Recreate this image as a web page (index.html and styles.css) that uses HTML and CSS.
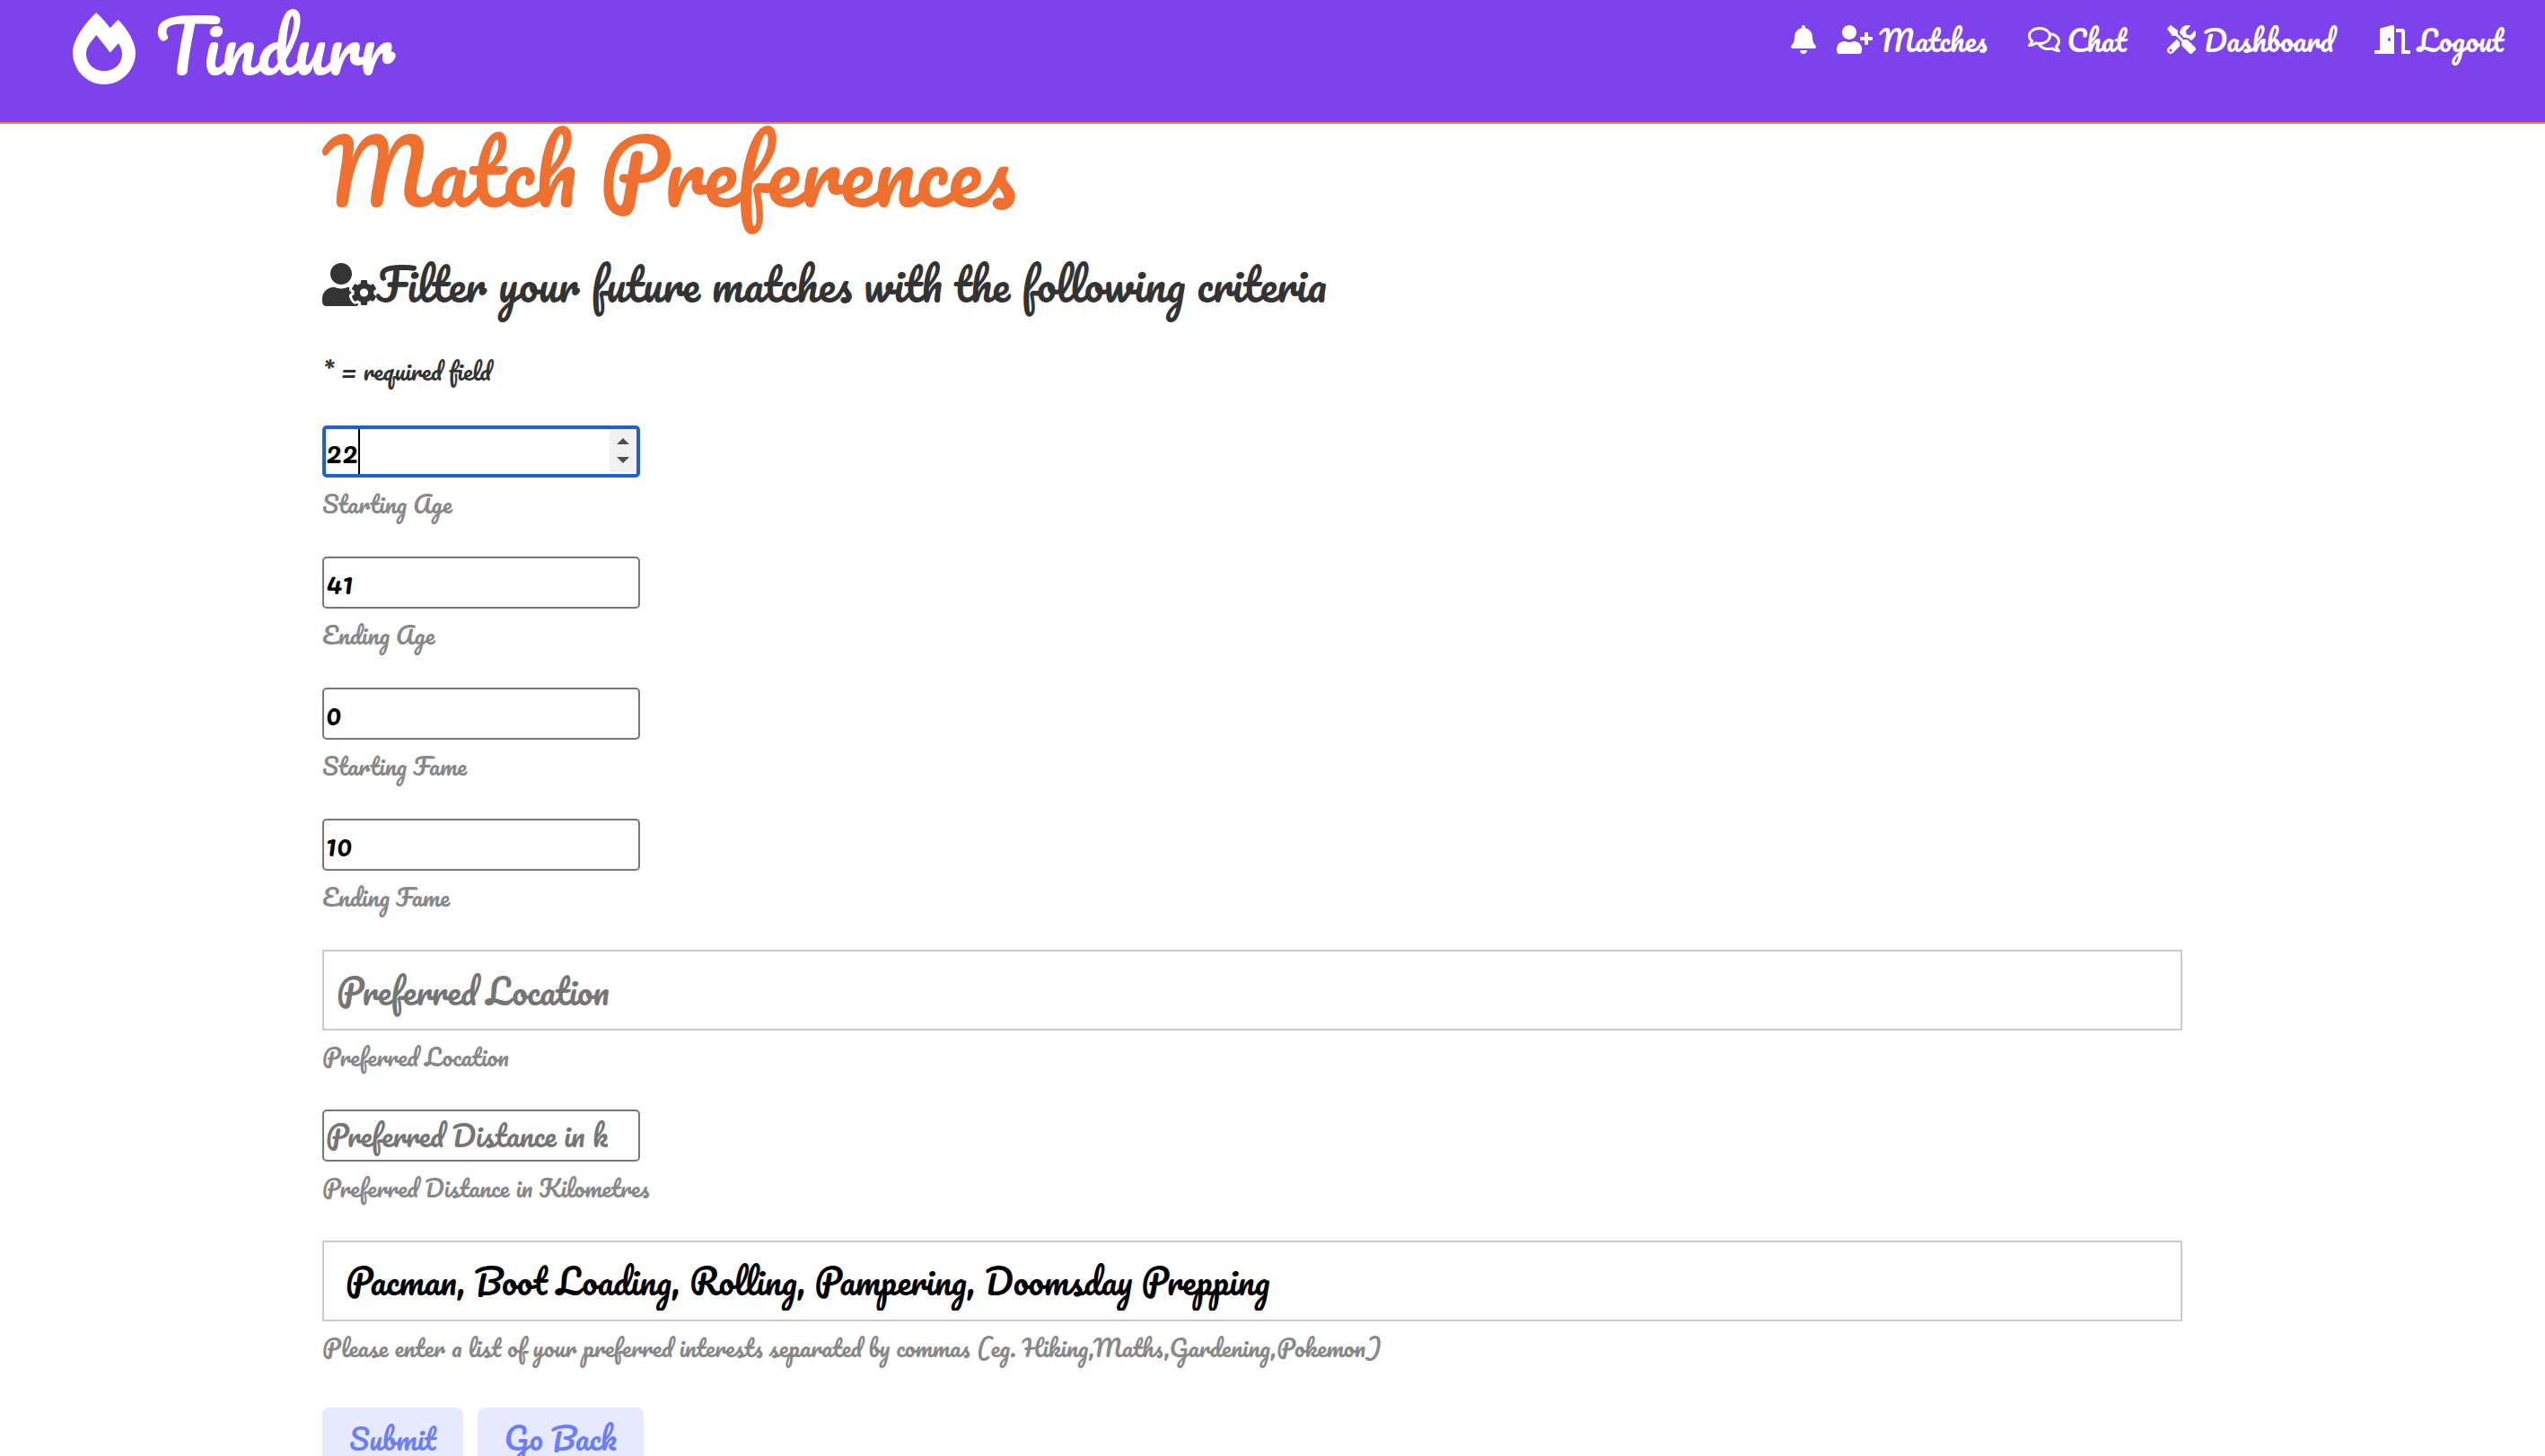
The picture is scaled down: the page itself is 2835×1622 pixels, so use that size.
FILE: index.html
```html
<!DOCTYPE html>
<html lang="en">
<head>
<meta charset="utf-8">
<title>Tindurr</title>
<link rel="stylesheet" href="styles.css">
</head>
<body>
<header class="navbar">
  <a class="brand" href="#">
    <svg class="brand-icon" viewBox="0 0 448 512" aria-hidden="true"><path d="M323.56 51.2c-20.8 19.3-39.58 39.59-56.22 59.97C240.08 73.62 206.28 35.53 168 0 69.74 91.17 0 209.96 0 281.6 0 408.85 100.29 512 224 512s224-103.15 224-230.4c0-53.27-51.98-163.14-124.44-230.4zm-19.47 340.65C282.43 407.01 255.72 416 226.86 416 154.71 416 96 368.26 96 290.75c0-38.61 24.31-72.63 72.79-130.75 6.93 7.98 98.83 125.34 98.83 125.34l58.63-66.88c4.14 6.85 7.91 13.55 11.27 19.97 27.35 52.19 15.81 118.97-33.43 153.42z"/></svg>
    <span>Tindurr</span>
  </a>
  <nav class="menu">
    <a class="menu-link bell" href="#" aria-label="Notifications"><svg class="icon icon-bell" viewBox="0 0 448 512"><path d="M224 512c35.32 0 63.97-28.65 63.97-64H160.03c0 35.35 28.65 64 63.97 64zm215.39-149.71c-19.32-20.76-55.47-51.99-55.47-154.29 0-77.7-54.48-139.9-127.94-155.16V32c0-17.67-14.32-32-31.98-32s-31.98 14.33-31.98 32v20.84C118.56 68.1 64.08 130.3 64.08 208c0 102.3-36.15 133.53-55.47 154.29-6 6.45-8.66 14.16-8.61 21.71.11 16.4 12.98 32 32.1 32h383.8c19.12 0 32-15.6 32.1-32 .05-7.55-2.61-15.27-8.61-21.71z"/></svg></a>
    <a class="menu-link" href="#"><svg class="icon icon-wide" viewBox="0 0 640 512" aria-hidden="true"><path d="M624 208h-64v-64c0-8.8-7.2-16-16-16h-32c-8.8 0-16 7.2-16 16v64h-64c-8.8 0-16 7.2-16 16v32c0 8.8 7.2 16 16 16h64v64c0 8.8 7.2 16 16 16h32c8.8 0 16-7.2 16-16v-64h64c8.8 0 16-7.2 16-16v-32c0-8.8-7.2-16-16-16zm-400 48c70.7 0 128-57.3 128-128S294.7 0 224 0 96 57.3 96 128s57.3 128 128 128zm89.6 32h-16.7c-22.2 10.2-46.9 16-72.9 16s-50.6-5.8-72.9-16h-16.7C60.2 288 0 348.2 0 422.4V464c0 26.5 21.5 48 48 48h352c26.5 0 48-21.5 48-48v-41.6c0-74.2-60.2-134.4-134.4-134.4z"/></svg><span>Matches</span></a>
    <a class="menu-link" href="#"><svg class="icon icon-chat" viewBox="0 0 576 512" aria-hidden="true"><path d="M532 386.2c27.5-27.1 44-61.1 44-98.2 0-80-76.5-146.1-176.2-157.9C368.3 72.5 294.3 32 208 32 93.1 32 0 103.6 0 192c0 37 16.5 71 44 98.2-15.3 30.7-37.3 54.5-37.7 54.9-6.3 6.7-8.1 16.5-4.4 25 3.6 8.5 12 14 21.2 14 53.5 0 96.7-20.2 125.2-38.8 9.2 2.1 18.7 3.7 28.4 4.9C208.1 407.6 281.8 448 368 448c20.8 0 40.8-2.4 59.8-6.8C456.3 459.7 499.4 480 553 480c9.2 0 17.5-5.5 21.2-14 3.6-8.5 1.9-18.3-4.4-25-.4-.3-22.5-24.1-37.8-54.8zm-392.8-92.3L122.1 305c-14.1 9.1-28.5 16.3-43.1 21.4 2.7-4.7 5.4-9.7 8-14.8l15.5-31.1L77.7 256C64.2 242.6 48 220.7 48 192c0-60.7 73.3-112 160-112s160 51.3 160 112-73.3 112-160 112c-16.5 0-33-1.9-49-5.6l-19.8-4.5zM498.3 352l-24.7 24.4 15.5 31.1c2.6 5.1 5.3 10.1 8 14.8-14.6-5.1-29-12.3-43.1-21.4l-17.1-11.1-19.9 4.6c-16 3.7-32.5 5.6-49 5.6-54 0-102.2-20.1-131.3-49.7C338 339.5 416 272.9 416 192c0-3.4-.4-6.7-.7-10C479.7 196.5 528 238.8 528 288c0 28.7-16.2 50.6-29.7 64z"/></svg><span>Chat</span></a>
    <a class="menu-link" href="#"><svg class="icon" viewBox="0 0 512 512" aria-hidden="true"><path d="M501.1 395.7L384 278.6c-23.1-23.1-57.6-27.6-85.4-13.9L192 158.1V96L64 0 0 64l96 128h62.1l106.6 106.6c-13.6 27.8-9.2 62.3 13.9 85.4l117.1 117.1c14.6 14.6 38.2 14.6 52.7 0l52.7-52.7c14.5-14.6 14.5-38.2 0-52.7zM331.7 225c28.3 0 54.9 11 74.9 31l19.4 19.4c15.8-6.9 30.8-16.5 43.8-29.5 37.1-37.1 49.7-89.3 37.9-136.7-2.2-9-13.5-12.1-20.1-5.5l-74.4 74.4-67.9-11.3L334 98.9l74.4-74.4c6.6-6.6 3.4-17.9-5.7-20.2-47.4-11.7-99.6.9-136.6 37.9-28.5 28.5-41.9 66.1-41.2 103.6l82.1 82.1c8.1-1.9 16.5-2.9 24.7-2.9zm-103.9 82l-56.7-56.7L18.7 402.8c-25 25-25 65.5 0 90.5s65.5 25 90.5 0l123.6-123.6c-7.6-19.9-9.9-41.6-5-62.7zM64 472c-13.2 0-24-10.8-24-24 0-13.3 10.7-24 24-24s24 10.7 24 24c0 13.2-10.7 24-24 24z"/></svg><span>Dashboard</span></a>
    <a class="menu-link" href="#"><svg class="icon icon-wide" viewBox="0 0 640 512" aria-hidden="true"><path d="M624 448h-80V113.45C544 86.19 522.47 64 496 64H384v64h96v384h144c8.84 0 16-7.16 16-16v-32c0-8.84-7.16-16-16-16zM312.24 1.01l-192 49.74C105.99 54.44 96 67.7 96 82.92V448H16c-8.84 0-16 7.16-16 16v32c0 8.84 7.16 16 16 16h336V33.18c0-21.58-19.56-37.41-39.76-32.17zM264 288c-13.25 0-24-14.33-24-32s10.75-32 24-32 24 14.33 24 32-10.75 32-24 32z"/></svg><span>Logout</span></a>
  </nav>
</header>
<main class="container">
  <h1 class="title">Match Preferences</h1>
  <p class="lead"><svg class="lead-icon" viewBox="0 0 640 512" aria-hidden="true"><path d="M610.5 373.3c2.6-14.1 2.6-28.5 0-42.6l25.8-14.9c3-1.7 4.3-5.2 3.3-8.5-6.7-21.6-18.2-41.2-33.2-57.4-2.3-2.5-6-3.1-9-1.4l-25.8 14.9c-10.9-9.3-23.4-16.5-36.9-21.3v-29.8c0-3.4-2.4-6.4-5.7-7.1-22.3-5-45-4.8-66.2 0-3.3.7-5.7 3.7-5.7 7.1v29.8c-13.5 4.8-26 12-36.9 21.3l-25.8-14.9c-2.9-1.7-6.7-1.1-9 1.4-15 16.2-26.5 35.8-33.2 57.4-1 3.3.4 6.8 3.3 8.5l25.8 14.9c-2.6 14.1-2.6 28.5 0 42.6l-25.8 14.9c-3 1.7-4.3 5.2-3.3 8.5 6.7 21.6 18.2 41.1 33.2 57.4 2.3 2.5 6 3.1 9 1.4l25.8-14.9c10.9 9.3 23.4 16.5 36.9 21.3v29.8c0 3.4 2.4 6.4 5.7 7.1 22.3 5 45 4.8 66.2 0 3.3-.7 5.7-3.7 5.7-7.1v-29.8c13.5-4.8 26-12 36.9-21.3l25.8 14.9c2.9 1.7 6.7 1.1 9-1.4 15-16.2 26.5-35.8 33.2-57.4 1-3.3-.4-6.8-3.3-8.5l-25.8-14.9zM496 400.5c-26.8 0-48.5-21.8-48.5-48.5s21.8-48.5 48.5-48.5 48.5 21.8 48.5 48.5-21.7 48.5-48.5 48.5zM224 256c70.7 0 128-57.3 128-128S294.7 0 224 0 96 57.3 96 128s57.3 128 128 128zm201.2 226.5c-2.3-1.2-4.6-2.6-6.8-3.9l-7.9 4.6c-6 3.4-12.8 5.3-19.6 5.3-10.9 0-21.4-4.6-28.9-12.6-18.3-19.8-32.3-43.9-40.2-69.6-5.5-17.7 1.9-36.4 17.9-45.7l7.9-4.6c-.1-2.6-.1-5.2 0-7.8l-7.9-4.6c-16-9.2-23.4-28-17.9-45.7.9-2.9 2.2-5.8 3.2-8.7-3.8-.3-7.5-1.2-11.4-1.2h-16.7c-22.2 10.2-46.9 16-72.9 16s-50.6-5.8-72.9-16h-16.7C60.2 288 0 348.2 0 422.4V464c0 26.5 21.5 48 48 48h352c10.1 0 19.5-3.2 27.2-8.5-1.2-3.8-2-7.7-2-11.8v-9.2z"/></svg><span>Filter your future matches with the following criteria</span></p>
  <p class="note">* = required field</p>
  <form class="form">
    <div class="field">
      <div class="number-box">
        <input class="number active" type="number" id="age-from" value="22">
        <span class="caret"></span>
        <span class="spinner"><span class="up"></span><span class="down"></span></span>
      </div>
      <label class="hint" for="age-from">Starting Age</label>
    </div>
    <div class="field">
      <input class="number" type="number" id="age-to" value="41">
      <label class="hint" for="age-to">Ending Age</label>
    </div>
    <div class="field">
      <input class="number" type="number" id="fame-from" value="0">
      <label class="hint" for="fame-from">Starting Fame</label>
    </div>
    <div class="field">
      <input class="number" type="number" id="fame-to" value="10">
      <label class="hint" for="fame-to">Ending Fame</label>
    </div>
    <div class="field">
      <input class="text" type="text" id="location" placeholder="Preferred Location">
      <label class="hint" for="location">Preferred Location</label>
    </div>
    <div class="field">
      <input class="number" type="number" id="distance" placeholder="Preferred Distance in kilometres">
      <label class="hint" for="distance">Preferred Distance in Kilometres</label>
    </div>
    <div class="field">
      <input class="text interests" type="text" id="interests" value="Pacman, Boot Loading, Rolling, Pampering, Doomsday Prepping">
      <label class="hint" for="interests">Please enter a list of your preferred interests separated by commas (eg. Hiking,Maths,Gardening,Pokemon)</label>
    </div>
    <div class="actions">
      <button class="btn" type="submit">Submit</button>
      <button class="btn btn-back" type="button">Go Back</button>
    </div>
  </form>
</main>
</body>
</html>
```
FILE: styles.css
```css
* { box-sizing: border-box; }
html { overflow: hidden; }
body {
  margin: 0;
  background: #fff;
  color: #333;
  font-family: Pacifico, Lato, cursive;
  font-weight: 400;
}
a { color: inherit; text-decoration: none; }
svg { display: block; fill: currentColor; flex: none; }

.navbar {
  display: flex;
  justify-content: space-between;
  align-items: flex-start;
  min-height: 138px;
  padding: 0 46px 0 81px;
  background: #7d42eb;
  border-bottom: 2px solid #f67c45;
  color: #fff;
}
.brand {
  display: flex;
  align-items: flex-start;
  gap: 22px;
  font-size: 80px;
  line-height: 100px;
}
.brand-icon { width: 70px; height: 80px; margin-top: 14px; }
.menu { display: flex; padding-top: 24px; gap: 45px; font-size: 32px; line-height: 40px; }
.menu-link { display: flex; align-items: center; gap: 8px; }
.bell { margin-right: -22px; }
.icon { width: 32px; height: 32px; }
.icon-bell { width: 28px; }
.icon-wide { width: 40px; }
.icon-chat { width: 36px; }

.container { padding: 0 404px 0 359px; }
.title { margin: 0; font-size: 96px; font-weight: 400; line-height: 104px; color: #f07030; }
.lead { display: flex; align-items: center; margin: 43px 0 20px; font-size: 48px; line-height: 64px; }
.lead-icon { width: 60px; height: 48px; }
.note { margin: 0; padding-top: 24px; font-size: 26px; line-height: 40px; }

.form { padding-top: 41px; }
.field { margin-bottom: 38px; }
.hint { display: block; padding: 9px 0 1px; font-size: 26px; line-height: 40px; color: #888; }
input { display: block; font: inherit; color: #000; background: #fff; outline: 0; }
input::placeholder { color: #757575; opacity: 1; }
.number {
  width: 354px;
  height: 58px;
  padding: 0 34px 2px 2px;
  border: 2px solid #767676;
  border-radius: 5px;
  font-size: 32px;
  appearance: textfield;
}
.number::-webkit-inner-spin-button { display: none; }
.number-box { position: relative; width: 354px; }
.active { border: 4px solid #2062cc; padding: 0 34px 2px 0; }
.caret { position: absolute; left: 40px; top: 4px; width: 2px; height: 50px; background: #000; }
.spinner {
  position: absolute;
  right: 4px;
  top: 4px;
  width: 30px;
  height: 48px;
  display: flex;
  flex-direction: column;
  align-items: center;
  justify-content: center;
  gap: 14px;
  background: #f0f0f0;
}
.up, .down { border: 7px solid transparent; }
.up { border-top: 0; border-bottom-color: #505050; }
.down { border-bottom: 0; border-top-color: #505050; }
.text { width: 100%; height: 90px; padding: 14px; border: 2px solid #ccc; font-size: 38px; }
.interests { padding: 14px 24px 16px; }

.actions { display: flex; gap: 16px; padding-top: 8px; }
.btn {
  padding: 0 30px;
  border: 0;
  border-radius: 8px;
  background: #e7eaff;
  color: #6a7ff9;
  font: inherit;
  font-size: 32px;
  line-height: 68px;
}
.btn-back { font-size: 34px; }
```
